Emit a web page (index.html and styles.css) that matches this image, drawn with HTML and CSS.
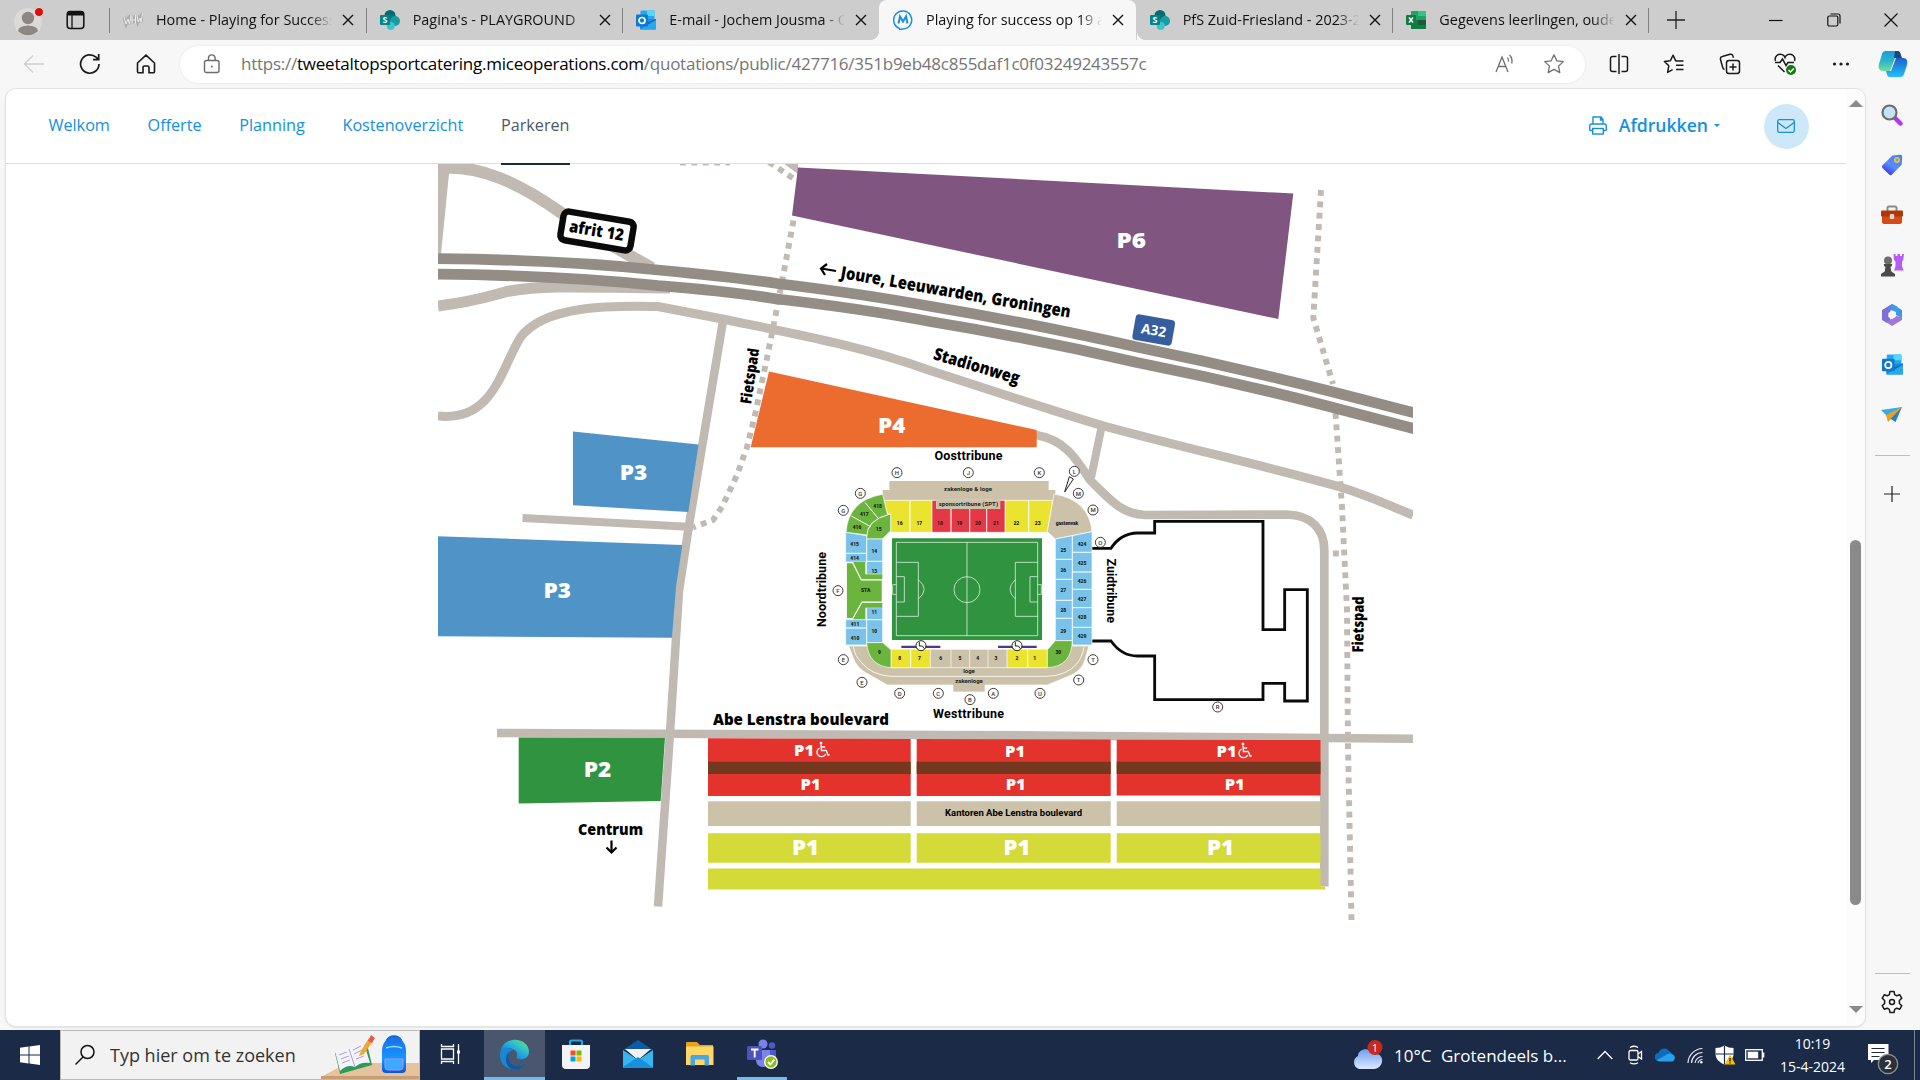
FILE: index.html
```html
<!DOCTYPE html>
<html lang="nl">
<head>
<meta charset="utf-8">
<title>Playing for success op 19 april</title>
<link rel="stylesheet" href="styles.css">
</head>
<body>
<svg class="defs" width="0" height="0">
  <defs>
    <linearGradient id="gPilotA" x1="0" y1="0" x2="0" y2="1"><stop offset="0" stop-color="#1a9be0"/><stop offset=".5" stop-color="#2ab5c8"/><stop offset="1" stop-color="#6fe09a"/></linearGradient>
    <linearGradient id="gPilotB" x1="0" y1="0" x2="0" y2="1"><stop offset="0" stop-color="#1f5fc9"/><stop offset="1" stop-color="#22c0fb"/></linearGradient>
    <linearGradient id="gTag" x1="1" y1="0" x2=".3" y2="1"><stop offset="0" stop-color="#3f7df6"/><stop offset=".6" stop-color="#5a8cff"/><stop offset="1" stop-color="#3a35ea"/></linearGradient>
    <linearGradient id="gEdge" x1="0" y1="1" x2="1" y2="0"><stop offset="0" stop-color="#0a5fb5"/><stop offset=".45" stop-color="#1f9fe0"/><stop offset=".7" stop-color="#38c9c0"/><stop offset="1" stop-color="#6fe05a"/></linearGradient>
    <linearGradient id="gCloud" x1="0" y1="0" x2="0" y2="1"><stop offset="0" stop-color="#6f9ff0"/><stop offset="1" stop-color="#dbe9ff"/></linearGradient>
    <linearGradient id="gPack" x1="0" y1="0" x2="0" y2="1"><stop offset="0" stop-color="#1a6fe8"/><stop offset=".6" stop-color="#1597ff"/><stop offset="1" stop-color="#0a56d8"/></linearGradient>
    <symbol id="sharepoint" viewBox="0 0 20 20"><circle cx="10" cy="5.5" r="5.5" fill="#036c70"/><circle cx="15" cy="11" r="5" fill="#1a9ba1"/><circle cx="10.7" cy="16" r="4" fill="#37c6d0"/><rect x="0" y="5" width="10" height="10" rx="1" fill="#038387"/><text x="5" y="13" font-size="9" font-weight="700" fill="#fff" text-anchor="middle">S</text></symbol>
    <symbol id="outlook" viewBox="0 0 20 20"><rect x="4.500" y="0.500" width="14" height="11" rx="1" fill="#28a8ea"/><path d="M11 .5h6.500a1 1 0 0 1 1 1V6H11z" fill="#50d9ff"/><path d="M4 9h16v9.500a1 1 0 0 1-1 1H5a1 1 0 0 1-1-1z" fill="#1490df"/><path d="M20 9v10L10 13z" fill="#0f6fc0"/><path d="M4 19.500L20 10v9a.6.6 0 0 1-.6.500z" fill="#28a8ea"/><rect x="0" y="4.500" width="12" height="12" rx="1" fill="#0f78d4"/><circle cx="6" cy="10.500" r="3" fill="none" stroke="#fff" stroke-width="1.700"/></symbol>
    <symbol id="close" viewBox="0 0 12 12"><path d="M1 1l10 10M11 1L1 11" stroke="#111" stroke-width="1.400" fill="none"/></symbol>
    <symbol id="wheel" viewBox="0 0 14 16"><circle cx="5" cy="1.500" r="1.400" fill="#fff"/><path d="M5 3l.4 6h4.800l2 4.800 1.500-.6M5.200 5.500h4M3.600 6.500a4.600 4.600 0 1 0 6.200 6" fill="none" stroke="#fff" stroke-width="1.300"/></symbol>
  </defs>
</svg>

<header class="tabbar">
  <div class="profile">
    <svg width="30" height="36" viewBox="0 0 30 36"><circle cx="14" cy="20" r="14" fill="#dcdad6"/><circle cx="14" cy="16" r="6.200" fill="#8b8783"/><path d="M4 29a10 5.500 0 0 1 20 0 14 14 0 0 1-20 0z" fill="#8b8783"/><circle cx="25" cy="10" r="4.500" fill="#e00b0b" stroke="#dcdcdc"/></svg>
    <svg class="spaces" width="20" height="20" viewBox="0 0 20 20"><rect x="1.200" y="1.600" width="16.600" height="16.800" rx="3" fill="none" stroke="#111" stroke-width="1.500"/><path d="M1 5.500V4a3 3 0 0 1 3-3h11a3 3 0 0 1 3 3v1.500z" fill="#111"/><path d="M6 5v13" stroke="#111" stroke-width="1.300"/></svg>
  </div>
  <nav class="tabs">
    <div class="tab"><svg class="fav" viewBox="0 0 20 20"><g stroke="#aaa" fill="none" stroke-width="3.200"><path d="M1 7l2 7 2-5 1.500 5L8 5M9 6v8M9 10h3M12.500 5v8M14 5l1 7 2-4 1 4 1.500-9"/></g><path d="M1 7l2 7 2-5 1.500 5L8 5M9 6v8M9 10h3M12.500 5v8M14 5l1 7 2-4 1 4 1.500-9" stroke="#eee" fill="none"/></svg><span class="title">Home - Playing for Success</span><svg class="x"><use href="#close"/></svg></div>
    <div class="tab"><svg class="fav"><use href="#sharepoint"/></svg><span class="title">Pagina's - PLAYGROUND</span><svg class="x"><use href="#close"/></svg></div>
    <div class="tab"><svg class="fav"><use href="#outlook"/></svg><span class="title">E-mail - Jochem Jousma - Outlook</span><svg class="x"><use href="#close"/></svg></div>
    <div class="tab active"><svg class="fav" viewBox="0 0 20 20"><path d="M7 18.600A9 9 0 1 1 10 19l-4 .5" fill="none" stroke="#1b8fe0" stroke-width="1.500"/><path d="M5.500 13.500L7 6.500l3 5 3-5 1.500 7" fill="none" stroke="#1b8fe0" stroke-width="2"/></svg><span class="title">Playing for success op 19 april</span><svg class="x"><use href="#close"/></svg></div>
    <div class="tab"><svg class="fav"><use href="#sharepoint"/></svg><span class="title">PfS Zuid-Friesland - 2023-2024</span><svg class="x"><use href="#close"/></svg></div>
    <div class="tab last"><svg class="fav" viewBox="0 0 20 20"><rect x="5" y="1" width="15" height="18" rx="1" fill="#21a366"/><path d="M12 1h7a1 1 0 0 1 1 1v4h-8z" fill="#33c481"/><path d="M5 10h15v8a1 1 0 0 1-1 1H6a1 1 0 0 1-1-1z" fill="#107c41"/><path d="M12 10h8v5h-8z" fill="#185c37"/><rect x="0" y="5" width="10" height="10" rx="1" fill="#107c41"/><path d="M3 7.500l4 5M7 7.500l-4 5" stroke="#fff" stroke-width="1.500"/></svg><span class="title">Gegevens leerlingen, ouders</span><svg class="x"><use href="#close"/></svg></div>
  </nav>
  <div class="newtab"><svg width="18" height="18" viewBox="0 0 18 18"><path d="M9 0v18M0 9h18" stroke="#222" stroke-width="1.300"/></svg></div>
  <div class="winctl">
    <span><svg width="14" height="14" viewBox="0 0 14 14"><path d="M0 7.500h13.500" stroke="#111" stroke-width="1.200"/></svg></span>
    <span><svg width="14" height="14" viewBox="0 0 14 14"><rect x=".8" y="3" width="10" height="10" rx="1.500" fill="none" stroke="#111" stroke-width="1.200"/><path d="M3.500 1h7.500a2 2 0 0 1 2 2v7.500" fill="none" stroke="#111" stroke-width="1.200"/></svg></span>
    <span><svg width="14" height="14" viewBox="0 0 14 14"><path d="M.5.500l13 13M13.500.500l-13 13" stroke="#111" stroke-width="1.200"/></svg></span>
  </div>
</header>

<div class="toolbar">
  <div class="navbtns">
    <span><svg width="22" height="20" viewBox="0 0 22 20" fill="none" stroke="#cfcfcf" stroke-width="1.400"><path d="M21 10H1.500M10 1.500L1.500 10l8.500 8.500"/></svg></span>
    <span><svg width="22" height="22" viewBox="0 0 22 22" fill="none" stroke="#1a1a1a" stroke-width="1.700"><path d="M20 11a9.200 9.200 0 1 1-3-6.800L19.500 6.500M19.700 1v5.700h-5.700"/></svg></span>
    <span><svg width="20" height="20" viewBox="0 0 20 20" fill="none" stroke="#1a1a1a" stroke-width="1.600"><path d="M1.500 9L10 1.200 18.500 9v8.500a1.200 1.200 0 0 1-1.200 1.200H13v-5.200a1.500 1.500 0 0 0-1.500-1.500h-3A1.500 1.500 0 0 0 7 13.500v5.200H2.700a1.200 1.200 0 0 1-1.200-1.200z"/></svg></span>
  </div>
  <div class="address">
    <svg class="lock" width="18" height="20" viewBox="0 0 18 20" fill="none" stroke="#6b6b6b" stroke-width="1.400"><rect x="1.500" y="6.500" width="14.500" height="12" rx="2"/><path d="M5.500 6.500V4.200a3.300 3.300 0 0 1 6.600 0v2.300"/><circle cx="8.800" cy="12.500" r="1" fill="#6b6b6b" stroke="none"/></svg>
    <span class="url">https://<b>tweetaltopsportcatering.miceoperations.com</b>/quotations/public/427716/351b9eb48c855daf1c0f03249243557c</span>
    <svg class="read" width="20" height="20" viewBox="0 0 20 20" fill="none" stroke="#6f6f6f" stroke-width="1.300"><path d="M1 18L7 3l6 15M3.200 12.500h7.600M12.500 3.500a6 6 0 0 1 1 4M14.500 1a9 9 0 0 1 2.200 8.500"/></svg>
    <svg width="22" height="22" viewBox="0 0 22 22" fill="none" stroke="#6f6f6f" stroke-width="1.300" stroke-linejoin="round"><path d="M11 1.800l2.800 6 6.500.8-4.800 4.500 1.300 6.500-5.800-3.200-5.800 3.200 1.300-6.500L1.700 8.600l6.500-.8z"/></svg>
  </div>
  <div class="actions">
    <span><svg width="20" height="20" viewBox="0 0 20 20" fill="none" stroke="#1a1a1a" stroke-width="1.500"><path d="M7.500 2.500h-4A2 2 0 0 0 1.500 4.500v11a2 2 0 0 0 2 2h4M12.500 2.500h4a2 2 0 0 1 2 2v11a2 2 0 0 1-2 2h-4M10 0v20"/></svg></span>
    <span><svg width="22" height="20" viewBox="0 0 22 20" fill="none" stroke="#1a1a1a" stroke-width="1.500" stroke-linejoin="round"><path d="M13 7.300L10 1.200l-2.600 5.500-6 .8 4.400 4.300-1.200 6.500 5-2.700M13 7h7.500M13 11.300h7.500M13 15.500h7.500"/></svg></span>
    <span><svg width="22" height="22" viewBox="0 0 22 22" fill="none" stroke="#1a1a1a" stroke-width="1.500"><rect x="7.500" y="7.500" width="13" height="13" rx="2.500"/><path d="M14 10.500v7M10.500 14h7M5.500 16.500a3 3 0 0 1-1.800-2L1.500 6.500a2.500 2.500 0 0 1 1.800-3L11 1.300a2.500 2.500 0 0 1 3 1.800l.4 1.600"/></svg></span>
    <span><svg width="22" height="22" viewBox="0 0 22 22" fill="none" stroke="#1a1a1a" stroke-width="1.500"><path d="M1.500 8A5 5 0 0 1 11 4.500 5 5 0 0 1 20.500 8M1 9.500h5l2.500-3.500 3.500 6.500 2-3h6M4 12.500l6.500 6.500"/><circle cx="17" cy="17" r="5" fill="#107c10" stroke="none"/><path d="M14.500 17l2 2 3.300-3.600" stroke="#fff"/></svg></span>
    <span><svg width="18" height="6" viewBox="0 0 18 6" fill="#1a1a1a"><circle cx="2.500" cy="3" r="1.600"/><circle cx="9" cy="3" r="1.600"/><circle cx="15.500" cy="3" r="1.600"/></svg></span>
    <span class="pilot"><svg width="30" height="28" viewBox="0 0 30 28"><path d="M8 1h11a3 3 0 0 1 3 2.500L23 8h-6L12 21H5C1 21 0 18 1 14L4 4a4 4 0 0 1 4-3z" fill="url(#gPilotA)"/><path d="M17 1h3a3 3 0 0 1 2.500 2.500L24 8h-8z" fill="#194a7a"/><path d="M18 8h7c4 0 5 3 4 7l-3 9a4 4 0 0 1-4 3H12a3 3 0 0 1-3-2.500L8 21h5z" fill="url(#gPilotB)"/></svg></span>
  </div>
</div>

<div class="middle">
  <section class="viewport">
    <div class="page">
      <div class="pagehead">
        <nav class="menu"><a>Welkom</a><a>Offerte</a><a>Planning</a><a>Kostenoverzicht</a><a class="on">Parkeren</a></nav>
        <div class="print"><svg width="18" height="19" viewBox="0 0 18 19" fill="none" stroke="#1590e0" stroke-width="1.400"><path d="M4 8V1h8l2 2.500V8M11.500 1v3H14"/><path d="M3.500 14.500h-2a.8.8 0 0 1-.8-.8V10a2 2 0 0 1 2-2h12.600a2 2 0 0 1 2 2v3.700a.8.800 0 0 1-.8.8h-2"/><rect x="3.700" y="12.500" width="10.600" height="5.500"/></svg><span>Afdrukken</span><i></i></div>
        <div class="mail"><svg width="18" height="14" viewBox="0 0 18 14" fill="none" stroke="#1590e0" stroke-width="1.300"><rect x=".7" y=".7" width="16.600" height="12.600" rx="1.500"/><path d="M.8 3.500L9 9.500l8.200-6"/></svg></div>
      </div>
      <svg class="map" width="975" height="862" viewBox="438 164 975 862">
        <g fill="none" stroke="#c1bab3">
          <path d="M438 164h25l-14 10-8 80h-3z" fill="#c1bab3" stroke="none"/>
          <path d="M438 168C480 164 520 184 560 212S620 250 652 268" stroke-width="12"/>
          <path d="M438 306C480 301 495 294 510 291C550 284 600 288 670 288" stroke-width="11"/>
          <path d="M438 416C492 422 500 372 520 338C545 303 620 306 658 306.500L720 318.500C780 331 860 345 930 370.500C990 390 1050 410 1102 425.500C1180 447 1270 467 1340 487C1370 496 1390 506 1413 515" stroke-width="9"/>
          <path d="M723 321L689 525L679 591L670 733L658 906.500" stroke-width="8.500"/>
          <path d="M522.500 518L693 527" stroke-width="8"/>
          <path d="M1036 435C1066 440 1077 460 1090 480C1110 500 1122 514 1145 515L1287 514.500C1312 515 1324.300 530 1324.300 550V886.500" stroke-width="8.700"/>
          <path d="M1102 425L1091 478" stroke-width="8"/>
          <g stroke-width="5.900" stroke-dasharray="5.900 5.500">
            <path d="M793.500 220.500L784 271L776 313L767 358L755 415L747 447L737 475L722 507L713 520L693 527.500"/>
            <path d="M769 162L797 181"/><path d="M680 162.500h50"/>
            <path d="M1321 190L1313.300 318L1333 384"/>
            <path d="M1335.500 413L1342 507L1347 610L1348 747L1351.500 920"/>
            <path d="M1333 553.500h6"/>
          </g>
        </g>
        <path d="M783 163h15v11z" fill="#c1bab3"/>
        <g fill="none" stroke="#938d86" stroke-width="10.800">
          <path d="M438 258.700C520 259.500 590 263 658 270C700 274 740 278 777 283.500C830 290 880 297 930 306.300C1000 318 1070 332 1137 347C1205 361 1270 376 1333 392L1420 414.300"/>
          <path d="M438 274.200C520 275 590 278.500 658 285.700C700 289 740 293 777 299C830 305 880 312 930 321.500C1000 333 1070 347 1137 362.500C1205 376 1270 391 1333 407.500L1420 430.200"/>
        </g>
        <path d="M798 167.500L1293.300 193.500L1278.300 319L792 215.500z" fill="#80557f"/>
        <path d="M769 371.500L1036.700 430V447.300H750.700z" fill="#eb6c2e"/>
        <path d="M573 431.500L698.600 444.500L688.300 512L573 505.300zM438 536.300L682.300 545L676 587L672 637.700L438 636.300z" fill="#5094c7"/>
        <path d="M497 733L1040 735.500L1413 738.700" fill="none" stroke="#c1bab3" stroke-width="8.600"/>
        <path d="M518.700 737.500L665 738L660.700 801L518.700 803.600z" fill="#30933f"/>
        <path d="M708 738.300L910.700 739V796H708zM916.700 739L1110.700 739.500V796H916.700zM1116.700 739.700L1320.500 740V795.600H1116.700z" fill="#e4322c"/>
        <path d="M708 761.700h202.700v12.300H708zM916.700 761.700h194v12.300h-194zM1116.700 761.700h203.800v12.300h-203.800z" fill="#74381e"/>
        <path d="M708 801.300h202.700v24.700H708zM916.700 801.300h194v24.700h-194zM1116.700 801.300h203.800v24.700h-203.800z" fill="#cbc2a9"/>
        <path d="M708 833.300h202.700v29.400H708zM916.700 833.300h194v29.400h-194zM1116.700 833.300h203.800v29.400h-203.800zM708 868.500H1320.500V886.500H1325V889.500H708z" fill="#d4db38"/>

        <g transform="translate(1040 500) scale(.33333)" fill="none" stroke="#0a0a0a" stroke-width="8.500"><path d="M156 145H213Q242 100 292 99H344V64H669V389H734V269H802V603H734V550H669V599H344V468H292Q245 468 213 423H156"/></g>

        <g class="lot" fill="#fff">
          <text x="1116.500" y="248.300" font-size="21.500" textLength="29.500" lengthAdjust="spacingAndGlyphs">P6</text><text x="878" y="432.900" font-size="20.500" textLength="27.500" lengthAdjust="spacingAndGlyphs">P4</text><text x="619.700" y="480" font-size="20.500" textLength="27.500" lengthAdjust="spacingAndGlyphs">P3</text><text x="543.500" y="598" font-size="20.500" textLength="27.500" lengthAdjust="spacingAndGlyphs">P3</text><text x="583.700" y="776.700" font-size="20.500" textLength="27.500" lengthAdjust="spacingAndGlyphs">P2</text>
          <text x="794" y="756" font-size="16" textLength="20" lengthAdjust="spacingAndGlyphs">P1</text><text x="1005" y="757" font-size="16" textLength="20" lengthAdjust="spacingAndGlyphs">P1</text><text x="1216.500" y="756.700" font-size="16" textLength="20" lengthAdjust="spacingAndGlyphs">P1</text>
          <text x="800.500" y="790" font-size="16" textLength="20" lengthAdjust="spacingAndGlyphs">P1</text><text x="1005.700" y="790" font-size="16" textLength="20" lengthAdjust="spacingAndGlyphs">P1</text><text x="1224.700" y="790" font-size="16" textLength="20" lengthAdjust="spacingAndGlyphs">P1</text>
          <text x="792" y="855" font-size="20.500" textLength="27" lengthAdjust="spacingAndGlyphs">P1</text><text x="1003.500" y="855" font-size="20.500" textLength="27" lengthAdjust="spacingAndGlyphs">P1</text><text x="1207" y="855" font-size="20.500" textLength="27" lengthAdjust="spacingAndGlyphs">P1</text>
        </g>
        <use href="#wheel" x="816" y="741.500" width="14" height="16"/><use href="#wheel" x="1238" y="742.500" width="14" height="16"/>
        <g class="street">
          <text x="713" y="724.700" font-size="15.500" textLength="176" lengthAdjust="spacingAndGlyphs">Abe Lenstra boulevard</text>
          <text x="578" y="834.700" font-size="15.500" textLength="65" lengthAdjust="spacingAndGlyphs">Centrum</text>
          <text transform="translate(840 278) rotate(9.800)" font-size="17" textLength="233" lengthAdjust="spacingAndGlyphs">Joure, Leeuwarden, Groningen</text>
          <text transform="translate(932.500 359) rotate(16.500)" font-size="17" textLength="89" lengthAdjust="spacingAndGlyphs">Stadionweg</text>
          <text transform="translate(751 404.500) rotate(-81.500)" font-size="15.500" textLength="56" lengthAdjust="spacingAndGlyphs">Fietspad</text>
          <text transform="translate(1363.300 652.500) rotate(-89.500)" font-size="15.500" textLength="56" lengthAdjust="spacingAndGlyphs">Fietspad</text>
        </g>
        <path d="M611.500 840.500v12M606.500 847.500l5 5 5-5M836 271l-14.500-2.500M827 264l-6 4.500 4 6.500" fill="none" stroke="#000" stroke-width="2.200"/>
        <g transform="translate(597 231) rotate(9.500)"><rect x="-35.500" y="-14.500" width="71" height="29" rx="5" fill="#fff" stroke="#0a0a0a" stroke-width="6.500"/><text class="street" x="-28" y="5.500" font-size="16.500" textLength="55" lengthAdjust="spacingAndGlyphs">afrit 12</text></g>
        <g transform="translate(1153.700 330) rotate(10)"><rect x="-20" y="-13" width="40" height="26" rx="4" fill="#365e9f"/><text class="street sign" x="-12.500" y="5.200" font-size="14" fill="#fff" textLength="25" lengthAdjust="spacingAndGlyphs">A32</text></g>
        <g class="din">
          <text x="934.500" y="460" font-size="12.500" textLength="68">Oosttribune</text><text x="933" y="718.300" font-size="12.500" textLength="71">Westtribune</text>
          <text transform="translate(825.500 627) rotate(-90)" font-size="12.500" textLength="75">Noordtribune</text><text transform="translate(1107 558.500) rotate(90)" font-size="12.500" textLength="64.500">Zuidtribune</text>
          <text x="945" y="815.700" font-size="9.500" textLength="137">Kantoren Abe Lenstra boulevard</text>
        </g>

        <g transform="translate(800 440) scale(.33333)">
          <g stroke="#fff" stroke-width="2">
            <path d="M146 618L160 655Q172 685 200 700L262 735H459V756H555V735H742L815 705Q845 690 855 660L867 618H815V605H200V618z" fill="#cbc2a9"/>
            <path d="M160 620Q165 650 185 668Q215 705 272 709H740Q800 707 830 672Q848 650 852 620" fill="none" stroke-width="2.500"/>
            <path d="M246 600H768V605L742 628H273L246 606z" fill="#fff" stroke="none"/>
            <path d="M273 683H742M453 628V683M509 628V683M564 628V683M391 628H621" fill="none"/>
            <path d="M268 123H746V150H766V181H248V150H268z" fill="#cbc2a9" stroke="none"/>
            <path d="M252 181H330V277H272V222H262zM330 181H396V277H330zM616 181H686V277H616zM686 181H758L742 277H686zM273 628H332V683H273zM332 628H391V683H332zM621 628H683V683H621zM683 628H742V683H683z" fill="#eae32f"/>
            <path d="M396 181H453V277H396zM453 181H509V277H453zM509 181H560V277H509zM560 181H615V277H560z" fill="#e53846"/>
            <path d="M762 162Q868 180 876 275L766 297L742 275z" fill="#cbc2a9"/>
            <path d="M138 277Q145 180 248 163L262 222L272 222V272L247 297H200V285z" fill="#6bb53f"/>
            <path d="M195 187L236 237M154 228L212 260M200 290Q200 240 270 222" fill="none" stroke-width="3"/>
            <path d="M137 277L200 287V340H137zM137 340H200V366H137zM200 297H248V364H200zM200 364H248V403H200zM200 503H248V539H200zM200 539H248V608H200zM137 539H200V564H137zM137 564H200V615H137zM766 297L817 287V358H766zM766 358H817V418H766zM766 418H817V481H766zM766 481H817V535H766zM766 535H817V602H766zM817 287L876 275V337H817zM817 337H876V396H817zM817 396H876V448H817zM817 448H876V503H817zM817 503H876V562H817zM817 562H876V615H817z" fill="#79c3ea"/>
            <path d="M138 366H196V403H247V418H182L158 370V535L185 488H247V503H196V538H138z" fill="#6bb53f" stroke="none"/>
            <path d="M139 368H158L184 420H247V486H186L158 536H139z" fill="#6bb53f" stroke-width="3.500"/>
            <path d="M200 608H248L273 630V683Q205 678 200 608zM766 602H817Q815 680 742 683V630z" fill="#6bb53f"/>
          </g>
          <path d="M408 181H601V207H408z" fill="#cbc2a9"/>
          <path d="M276 295H726V600H276z" fill="#30933f"/>
          <g fill="none" stroke="#d9ecd9" stroke-width="2.500"><path d="M289 307H713V587H289zM501 307V587M289 367H355V529H289M289 410H313V486H289M289 434H278V463H289M713 367H646V529H713M713 410H690V486H713M713 434H724V463H713M355 419Q390 448 355 477M646 419Q614 448 646 477"/><circle cx="501" cy="449" r="39"/></g>
          <path d="M304 617H421V624H304zM594 617H710V624H594z" fill="#4b3a8c"/>
          <g fill="#fff" stroke="#222" stroke-width="3"><circle cx="363" cy="617" r="15"/><circle cx="651" cy="617" r="15"/><path d="M358 606v12h9l6 8M646 606v12h9l6 8" fill="none"/><path d="M808 110L794 156L820 117z" fill="none"/></g>
          <g fill="#fff" stroke="#3a3a3a" stroke-width="3"><circle cx="291" cy="98" r="15"/><circle cx="505" cy="98" r="15"/><circle cx="718" cy="98" r="15"/><circle cx="823" cy="94" r="15"/><circle cx="181" cy="160" r="15"/><circle cx="130" cy="211" r="15"/><circle cx="835" cy="160" r="15"/><circle cx="879" cy="210" r="15"/><circle cx="901" cy="307" r="15"/><circle cx="114" cy="452" r="15"/><circle cx="130" cy="659" r="15"/><circle cx="186" cy="727" r="15"/><circle cx="299" cy="760" r="15"/><circle cx="415" cy="760" r="15"/><circle cx="510" cy="779" r="15"/><circle cx="580" cy="760" r="15"/><circle cx="720" cy="760" r="15"/><circle cx="836" cy="720" r="15"/><circle cx="879" cy="659" r="15"/><circle cx="1253" cy="801" r="15"/></g>
          <g class="gate"><text x="291" y="105">H</text><text x="505" y="105">J</text><text x="718" y="105">K</text><text x="823" y="101">L</text><text x="181" y="167">G</text><text x="130" y="218">G</text><text x="835" y="167">M</text><text x="879" y="217">M</text><text x="901" y="314">O</text><text x="114" y="459">F</text><text x="130" y="666">E</text><text x="186" y="734">E</text><text x="299" y="767">D</text><text x="415" y="767">C</text><text x="510" y="786">B</text><text x="580" y="767">A</text><text x="720" y="767">U</text><text x="836" y="727">T</text><text x="879" y="666">T</text><text x="1253" y="808">R</text></g>
          <g class="vak"><text x="299" y="255">16</text><text x="358" y="255">17</text><text x="420" y="255">18</text><text x="478" y="255">19</text><text x="534" y="255">20</text><text x="588" y="255">21</text><text x="649" y="255">22</text><text x="713" y="255">23</text><text x="233" y="204">418</text><text x="193" y="228">417</text><text x="171" y="266">416</text><text x="236" y="274">15</text><text x="164" y="317">415</text><text x="164" y="361">414</text><text x="223" y="339">14</text><text x="223" y="398">13</text><text x="197" y="457">STA</text><text x="223" y="521">11</text><text x="165" y="557">411</text><text x="223" y="579">10</text><text x="165" y="599">410</text><text x="238" y="643">9</text><text x="299" y="661">8</text><text x="358" y="661">7</text><text x="422" y="661">6</text><text x="480" y="661">5</text><text x="533" y="661">4</text><text x="588" y="661">3</text><text x="651" y="661">2</text><text x="704" y="661">1</text><text x="775" y="643">30</text><text x="790" y="337">25</text><text x="790" y="397">26</text><text x="790" y="457">27</text><text x="790" y="517">28</text><text x="790" y="579">29</text><text x="846" y="319">424</text><text x="846" y="375">425</text><text x="846" y="430">426</text><text x="846" y="483">427</text><text x="846" y="537">428</text><text x="846" y="595">429</text><text x="801" y="255" textLength="68">gastenvak</text></g>
          <g class="loge"><text x="504" y="153" textLength="144">zakenloge &amp; loge</text><text x="505" y="199" textLength="178">sponsortribune (SPT)</text><text x="507" y="700" textLength="35">loge</text><text x="507" y="729" textLength="83">zakenloge</text></g>
        </g>
      </svg>
    </div>
    <div class="scroll"><i class="up"></i><i class="thumb"></i><i class="down"></i></div>
  </section>
  <aside class="side">
    <span><svg width="22" height="22" viewBox="0 0 22 22"><path d="M13.500 13.500l6 6" stroke="#b933f0" stroke-width="4.500" stroke-linecap="round"/><circle cx="8.500" cy="8.500" r="7" fill="#c4e2f6" stroke="#6e6e6e" stroke-width="2.200"/></svg></span>
    <span><svg width="22" height="22" viewBox="0 0 22 22"><path d="M11.500 1.500L19 .8a2 2 0 0 1 2.200 2l-.5 8L11 20.500a2 2 0 0 1-2.800 0L1.500 14a2 2 0 0 1 0-2.800z" fill="url(#gTag)"/><circle cx="16" cy="6" r="2.200" fill="#7b93e8" stroke="#f7c724" stroke-width="1.600"/></svg></span>
    <span><svg width="24" height="20" viewBox="0 0 24 20"><path d="M7.500 6V3a1.500 1.500 0 0 1 1.500-1.500h6A1.500 1.500 0 0 1 16.500 3v3" fill="none" stroke="#8b8b8b" stroke-width="2"/><path d="M2 9h20v8a2 2 0 0 1-2 2H4a2 2 0 0 1-2-2z" fill="#d94b14"/><rect x="1" y="5.500" width="22" height="6" rx="1" fill="#b13505"/><rect x="9.800" y="9" width="4.400" height="5" rx="1" fill="#d5d5d5"/></svg></span>
    <span><svg width="24" height="24" viewBox="0 0 24 24"><path d="M13.500 1h2v2h2V1h2.500v2h2V1H24l-.8 6-1.200 1.500v5l1.700 4H14l1.500-4v-5L14 7z" fill="#b65cf5"/><circle cx="8" cy="7.500" r="4" fill="#6e6e6e"/><path d="M4 11h8v2l-1.500.8.8 4.700L15 21v2.500H1V21l3.700-2.500.8-4.700L4 13z" fill="#4a4a4a"/></svg></span>
    <span><svg width="22" height="24" viewBox="0 0 22 24"><path d="M11 1L1 7v10l5 3 3-3V8l8-4z" fill="#7c6fd8"/><path d="M11 1l10 6v8l-6-3V9L8 6V3z" fill="#3b9ae8"/><path d="M21 14v3l-10 6-6-4 10-6z" fill="#a178d8"/><path d="M11 8l3.700 2v4L11 16l-3.700-2v-4z" fill="#f7f7f7"/></svg></span>
    <span><svg width="21" height="21"><use href="#outlook"/></svg></span>
    <span><svg width="24" height="18" viewBox="0 0 24 18"><path d="M1 4L22 1 9 12z" fill="#38a9ee"/><path d="M22 1l-6.500 15-8-5z" fill="#1d80dc"/><path d="M22 1L6 9l2 7z" fill="#e8a21b"/><path d="M8 16l3.500-4L22 1z" fill="#1561b5"/></svg></span>
    <hr>
    <span class="add"><svg width="16" height="16" viewBox="0 0 16 16"><path d="M8 0v16M0 8h16" stroke="#222" stroke-width="1.200"/></svg></span>
    <hr class="low">
    <span class="gear"><svg width="22" height="24" viewBox="0 0 22 24" fill="none" stroke="#1a1a1a" stroke-width="1.500" stroke-linejoin="round"><path d="M9 1.500h4l.7 3.200 2 1.100 3.100-1 2 3.500-2.400 2.200v3l2.400 2.200-2 3.500-3.100-1-2 1.100-.7 3.200H9l-.7-3.200-2-1.100-3.100 1-2-3.500 2.400-2.200v-3L1.200 8.300l2-3.500 3.100 1 2-1.100z"/><circle cx="11" cy="12" r="2.500"/></svg></span>
  </aside>
</div>

<footer class="taskbar">
  <div class="start"><svg width="20" height="20" viewBox="0 0 20 20" fill="#fff"><path d="M0 2.800l8.500-1.200v7.900H0zM9.500 1.400L20 0v9.500H9.500zM0 10.500h8.500v7.900L0 17.200zM9.500 10.500H20V20L9.500 18.600z"/></svg></div>
  <div class="search"><svg width="22" height="22" viewBox="0 0 22 22" fill="none" stroke="#111" stroke-width="1.500"><circle cx="13.500" cy="8" r="6.500"/><path d="M9 13L1.500 20.500"/></svg><span>Typ hier om te zoeken</span>
    <svg class="art" width="98" height="48" viewBox="0 0 98 48"><path d="M0 46L26 32H98V46z" fill="#e6c39c"/><path d="M0 45h98v3H0z" fill="#c79e73"/><path d="M14 22L46 13l5 21-32 9z" fill="#2e9a57"/><path d="M14 20c6-4 10-4 14-2 3-5 9-7 15-6l6 20c-6-1-11 0-15 4-5-2-10-1-15 4z" fill="#f4f2fb"/><path d="M28 18l6 18M18 24l8-3M20 28l8-3M21 32l8-3M32 19l8-4M33 23l8-4M35 28l8-3" stroke="#a9a5c5" stroke-width="1"/><path d="M38 25l2-5L48 7l4 3-9 13z" fill="#f6a52c"/><path d="M47 10l3-6 4 3-3 5z" fill="#e8594d"/><path d="M66 10a8 8 0 0 1 14 0" fill="none" stroke="#1a62d2" stroke-width="3"/><path d="M61 20c0-8 5-14 12-14s12 6 12 14v18a4 4 0 0 1-4 4H65a4 4 0 0 1-4-4z" fill="url(#gPack)"/><path d="M64 28h18v8a3 3 0 0 1-3 3H67a3 3 0 0 1-3-3z" fill="#3aaaff" stroke="#b48cff"/><path d="M65 17q8-3 16 0" stroke="#9cd8ff" stroke-width="1.500" fill="none"/></svg></div>
  <div class="apps">
    <span class="app"><svg width="22" height="22" viewBox="0 0 22 22" fill="none" stroke="#fff" stroke-width="1.300"><path d="M1.500 6h12v10h-12zM1.500 1v2.500h12V1M1.500 21v-2.500h12V21M18.500 1v20"/><rect x="17" y="7.500" width="3" height="3" fill="#fff" stroke="none"/></svg></span>
    <span class="app cur"><svg width="31" height="31" viewBox="0 0 31 31"><path d="M1 14C2 6 8 .7 16 .7c8 0 14 5 14 12 0 5-4 7.500-8 7.500-3.500 0-5-1.200-4.500-2 1.200-1.500 1-5-1.500-7C12 8.500 4 9 1 14z" fill="url(#gEdge)"/><path d="M1 14c2-5 9-7 14-3-4 0-6 3-6 7 0 5 4 9.500 9.500 9.500 3 0 6-.8 8.500-3C24.500 28 20.500 30.500 16 30.500 7 30.500 0 24 1 14z" fill="#1c86d1"/><path d="M10 13c-2 4-1 10 4 13 4 2.300 9 1 13-1.500-3 4.500-7 6-11 6-6 0-9-5-9-10 0-3.500 1-6 3-7.500z" fill="#0f58a3"/></svg></span>
    <span class="app"><svg width="28" height="30" viewBox="0 0 28 30"><path d="M8 8V3a1.500 1.500 0 0 1 1.500-1.500h9A1.500 1.500 0 0 1 20 3v5" fill="none" stroke="#27a4e0" stroke-width="2.200"/><path d="M0 6h28v20a4 4 0 0 1-4 4H4a4 4 0 0 1-4-4z" fill="#f4f4f6"/><path d="M8.500 11.500H13.500V16.500H8.500z" fill="#f25022"/><path d="M14.500 11.500H19.500V16.500H14.500z" fill="#7fba00"/><path d="M8.500 17.500H13.500V22.500H8.500z" fill="#00a4ef"/><path d="M14.500 17.500H19.500V22.500H14.500z" fill="#ffb900"/></svg></span>
    <span class="app"><svg width="30" height="28" viewBox="0 0 30 28"><path d="M0 10L15 0l15 10z" fill="#0d5aa7"/><path d="M2 9h26L15 20z" fill="#f3f3f5"/><path d="M0 10l15 10 15-10v17a1 1 0 0 1-1 1H1a1 1 0 0 1-1-1z" fill="#35b6f1"/><path d="M0 27L15 17l15 10.500-1 .5H1z" fill="#1a8fdb"/></svg></span>
    <span class="app"><svg width="28" height="24" viewBox="0 0 28 24"><path d="M0 1a1 1 0 0 1 1-1h10l3 3h13v6H0z" fill="#e7a21a"/><rect x="0" y="4.500" width="27.500" height="18.500" fill="#ffd766"/><path d="M4.500 23.500v-9a1.500 1.500 0 0 1 1.500-1.500h15.500a1.500 1.500 0 0 1 1.500 1.500v9h-4.500v-6h-9.500v6z" fill="#4ba5e2"/></svg></span>
    <span class="app run"><svg width="31" height="30" viewBox="0 0 31 30"><circle cx="16" cy="5" r="4.500" fill="#7b83eb"/><circle cx="25" cy="6.500" r="3.200" fill="#5059c9"/><path d="M20 11h9v8a5 5 0 0 1-9 3z" fill="#5059c9"/><path d="M8 11h15v9a7 7 0 0 1-14 2z" fill="#7b83eb"/><rect x="0" y="7" width="15" height="14" rx="1.500" fill="#4b53bc"/><path d="M4 10.500h7.500M7.700 10.500v8" stroke="#fff" stroke-width="1.900"/><circle cx="24" cy="23" r="6.300" fill="#8cbd18" stroke="#fff" stroke-width="1.300"/><path d="M21 23l2.300 2.400 4-4.700" stroke="#fff" stroke-width="1.900" fill="none"/></svg></span>
  </div>
  <div class="weather"><svg width="31" height="30" viewBox="0 0 31 30"><path d="M7 29a7 7 0 0 1-1-13C6 8 19 7 22 14c6-1 9 4 8 8s-4 7-8 7z" fill="url(#gCloud)"/><circle cx="23" cy="7.500" r="7.500" fill="#c8281d"/><text x="23" y="11.500" font-size="11" fill="#fff" text-anchor="middle">1</text></svg><span class="temp">10°C</span><span class="sky">Grotendeels b...</span></div>
  <div class="tray">
    <span><svg width="16" height="10" viewBox="0 0 16 10"><path d="M.7 9L8 1.500 15.300 9" fill="none" stroke="#fff" stroke-width="1.300"/></svg></span>
    <span><svg width="15" height="20" viewBox="0 0 15 20" fill="none" stroke="#fff" stroke-width="1.300"><rect x="1" y="5.500" width="9" height="9.500" rx="1.500"/><path d="M10 9l3.500-2.500v7.500L10 11.500M2 2.500Q6 0 10 2.500M2 17.700q4 2.400 8 0"/></svg></span>
    <span><svg width="21" height="14" viewBox="0 0 21 14"><path d="M4 13a4 4 0 0 1-.6-8A6 6 0 0 1 14 3a5 5 0 0 1 3 3l-6 6z" fill="#0f6cbd"/><path d="M2 12L12 6.500A5 5 0 0 1 17 6a4 4 0 0 1 .5 7.500H4a4 4 0 0 1-2-1.500z" fill="#28a0ee"/></svg></span>
    <span><svg width="16" height="17" viewBox="0 0 16 17" fill="none" stroke="#e8e8ee" stroke-width="1.200"><path d="M1 16A15 15 0 0 1 15.500 1.500M4.500 16A11 11 0 0 1 15.500 5.500M8 16a7.500 7.500 0 0 1 7.500-6.500M11 16a5 5 0 0 1 4.500-3.500"/><circle cx="14.300" cy="15.300" r="1.200" fill="#fff" stroke="none"/></svg></span>
    <span><svg width="21" height="20" viewBox="0 0 21 20"><path d="M9.500.5q4 2.500 9 2.500v6c0 5-4 8.500-9 10.500C4.500 17.500.5 14 .5 9V3q5 0 9-2.500z" fill="#fff"/><path d="M9.500.5v19M.5 9h18" stroke="#1b2a47" stroke-width="1.200"/><path d="M15 9.500l5.500 10h-11z" fill="#fcc000"/><path d="M15 13v3.500M15 17.500v1" stroke="#111" stroke-width="1.300"/></svg></span>
    <span><svg width="20" height="12" viewBox="0 0 20 12"><rect x=".7" y=".7" width="16.600" height="10.600" fill="none" stroke="#fff" stroke-width="1.300"/><rect x="2.700" y="2.700" width="10.500" height="6.600" fill="#fff"/><path d="M18.700 3.500v5" stroke="#fff" stroke-width="1.300"/></svg></span>
  </div>
  <div class="clock"><span>10:19</span><span class="date">15-4-2024</span></div>
  <div class="notif"><svg width="31" height="31" viewBox="0 0 31 31"><path d="M0 0h20.500v16H6l-3 3v-3H0z" fill="#fff"/><path d="M3.500 4.500h13M3.500 8.500h13M3.500 12.500h8" stroke="#1b2a47" stroke-width="1.200"/><circle cx="20" cy="20" r="9.700" fill="#2d3036" stroke="#8d929b" stroke-width="1.300"/><text x="20" y="25" font-size="13" font-weight="600" fill="#fff" text-anchor="middle">2</text></svg></div>
</footer>
</body>
</html>
```
FILE: styles.css
```css
* { box-sizing: border-box; }
body { margin: 0; width: 1920px; height: 1080px; overflow: hidden; display: flex; flex-direction: column; background: #f7f7f7; font-family: "Open Sans", "Noto Sans", sans-serif; color: #111; }
svg { display: block; flex: none; }
.defs { position: absolute; }

/* Tab strip */
.tabbar { height: 40px; display: flex; background: #cdcdcd; flex: none; }
.profile { width: 109px; display: flex; align-items: center; padding-left: 14px; gap: 22px; }
.tabs { display: flex; width: 1540px; }
.tab { flex: 1; display: flex; align-items: center; padding-left: 14px; position: relative; }
.tab::before { content: ""; position: absolute; left: 0; top: 8px; height: 25px; width: 1px; background: #808080; }
.tab.active::before { left: -8px; top: 32px; width: 274px; height: 8px; background: radial-gradient(circle at 0 0, transparent 7.500px, #f7f7f7 8px) left / 8px 8px no-repeat, radial-gradient(circle at 100% 0, transparent 7.500px, #f7f7f7 8px) right / 8px 8px no-repeat; }
.tab.active + .tab::before { display: none; }
.tab.last::after { content: ""; position: absolute; right: 0; top: 8px; height: 25px; width: 1px; background: #808080; }
.tab.active { background: #f7f7f7; border-radius: 8px 8px 0 0; }
.fav { width: 20px; height: 20px; margin-right: 13px; }
.title { width: 176px; margin-right: 10px; overflow: hidden; white-space: nowrap; font-size: 14.400px; line-height: 24px; -webkit-mask-image: linear-gradient(90deg, #000 154px, transparent 176px); mask-image: linear-gradient(90deg, #000 154px, transparent 176px); }
.x { width: 12px; height: 12px; }
.newtab { width: 54px; display: grid; place-items: center; }
.winctl { margin-left: auto; display: flex; }
.winctl span { width: 57.500px; display: grid; place-items: center; }

/* Address row */
.toolbar { height: 48px; display: flex; align-items: center; flex: none; }
.navbtns { display: flex; padding-left: 6px; width: 180px; }
.navbtns span { width: 56px; display: grid; place-items: center; }
.address { width: 1405px; height: 37px; border-radius: 19px; background: #fff; box-shadow: 0 0 3px rgba(0,0,0,.08); display: flex; align-items: center; padding: 0 20px 0 23px; }
.url { margin-left: 20px; font-size: 17px; letter-spacing: -.245px; color: #757575; white-space: nowrap; line-height: 30px; }
.url b { font-weight: 400; color: #000; }
.read { margin-left: auto; margin-right: 28px; }
.actions { display: flex; align-items: center; padding-left: 6px; }
.actions span { width: 55.500px; display: grid; place-items: center; }
.actions .pilot { width: 49px; }

/* Page area */
.middle { height: 942px; display: flex; flex: none; }
.viewport { width: 1861px; height: 939px; margin-left: 5px; border: 1px solid #e2e2e2; border-radius: 11px; background: #fff; overflow: hidden; display: flex; box-shadow: 0 1px 2px rgba(0,0,0,.08); }
.page { width: 1840px; }
.pagehead { height: 75px; border-bottom: 1px solid #dedede; display: flex; align-items: center; padding-left: 42.500px; }
.menu { display: flex; gap: 37.700px; align-self: flex-start; height: 76px; }
.menu a { font-size: 16.200px; line-height: 73px; color: #1590e0; }
.menu .on { color: #4d5863; border-bottom: 2px solid #1b2a3d; height: 76px; }
.print { margin-left: auto; display: flex; align-items: center; color: #1590e0; font-weight: 600; font-size: 17.600px; margin-bottom: 2px; }
.print span { margin-left: 12px; }
.print i { margin-left: 6px; border: 3px solid transparent; border-top-color: #1590e0; border-bottom: 0; }
.mail { width: 45px; height: 45px; border-radius: 50%; background: #cde8f9; margin: 0 37.500px 0 43.500px; display: grid; place-items: center; }
.map { margin-left: 432px; }
.scroll { flex: 1; background: #fcfcfc; display: flex; flex-direction: column; align-items: center; padding-top: 11px; }
.up { border: 7px solid transparent; border-bottom-color: #8a8a8a; border-top: 0; }
.thumb { width: 11px; height: 365px; border-radius: 6px; background: #8a8a8a; margin-top: 433px; }
.down { border: 7px solid transparent; border-top-color: #8a8a8a; border-bottom: 0; margin-top: 101px; }

/* Map lettering */
.lot { font-family: "Open Sans", sans-serif; font-weight: 800; }
.street { font-family: "Open Sans", sans-serif; font-weight: 800; }
.sign { font-weight: 700; }
.din { font-family: Roboto, sans-serif; font-weight: 700; }
.gate { font: 500 18px Roboto, sans-serif; text-anchor: middle; fill: #333; }
.vak { font: 900 15px Roboto, sans-serif; text-anchor: middle; fill: #1c1c1c; }
.loge { font: 700 18px Roboto, sans-serif; text-anchor: middle; fill: #1c1c1c; }

/* Browser sidebar */
.side { flex: 1; display: flex; flex-direction: column; align-items: center; padding: 2px 2px 0 0; }
.side span { height: 50.200px; display: grid; place-items: center; }
.side hr { width: 35px; height: 1px; border: 0; margin: 15px 0 0; background: #bdbdbd; flex: none; }
.side .add { height: 78px; }
.side .low { margin-top: 440px; }
.side .gear { height: 56px; }

/* Taskbar */
.taskbar { height: 50px; display: flex; background: #1b2a47; color: #fff; flex: none; }
.start { width: 60px; display: grid; place-items: center; }
.search { width: 360px; border: 1px solid #bbb; background: #f2f2f2; color: #333; display: flex; align-items: center; padding-left: 13px; }
.search span { margin-left: 14px; font-size: 18px; white-space: nowrap; width: 212px; }
.apps { display: flex; }
.app { width: 62px; display: grid; place-items: center; border-bottom: 3px solid transparent; padding-top: 1px; }
.app:first-child { width: 64px; padding-right: 2px; }
.cur { background: #4a566d; border-color: #76b9ed; width: 61px; }
.run { background: linear-gradient(#76b9ed, #76b9ed) 6px 100% / 50px 3px no-repeat border-box; }
.weather { margin-left: 559px; display: flex; align-items: center; font-size: 17px; white-space: nowrap; }
.temp { margin-left: 11px; width: 47px; }
.sky { width: 149px; }
.tray { display: flex; }
.tray span { width: 30px; display: grid; place-items: center; }
.clock { width: 85px; display: flex; flex-direction: column; align-items: center; justify-content: center; font-size: 14px; line-height: 23px; }
.notif { width: 60px; border-right: 1px solid #7d8798; margin-right: 5px; padding: 14px 0 0 13px; }
```
